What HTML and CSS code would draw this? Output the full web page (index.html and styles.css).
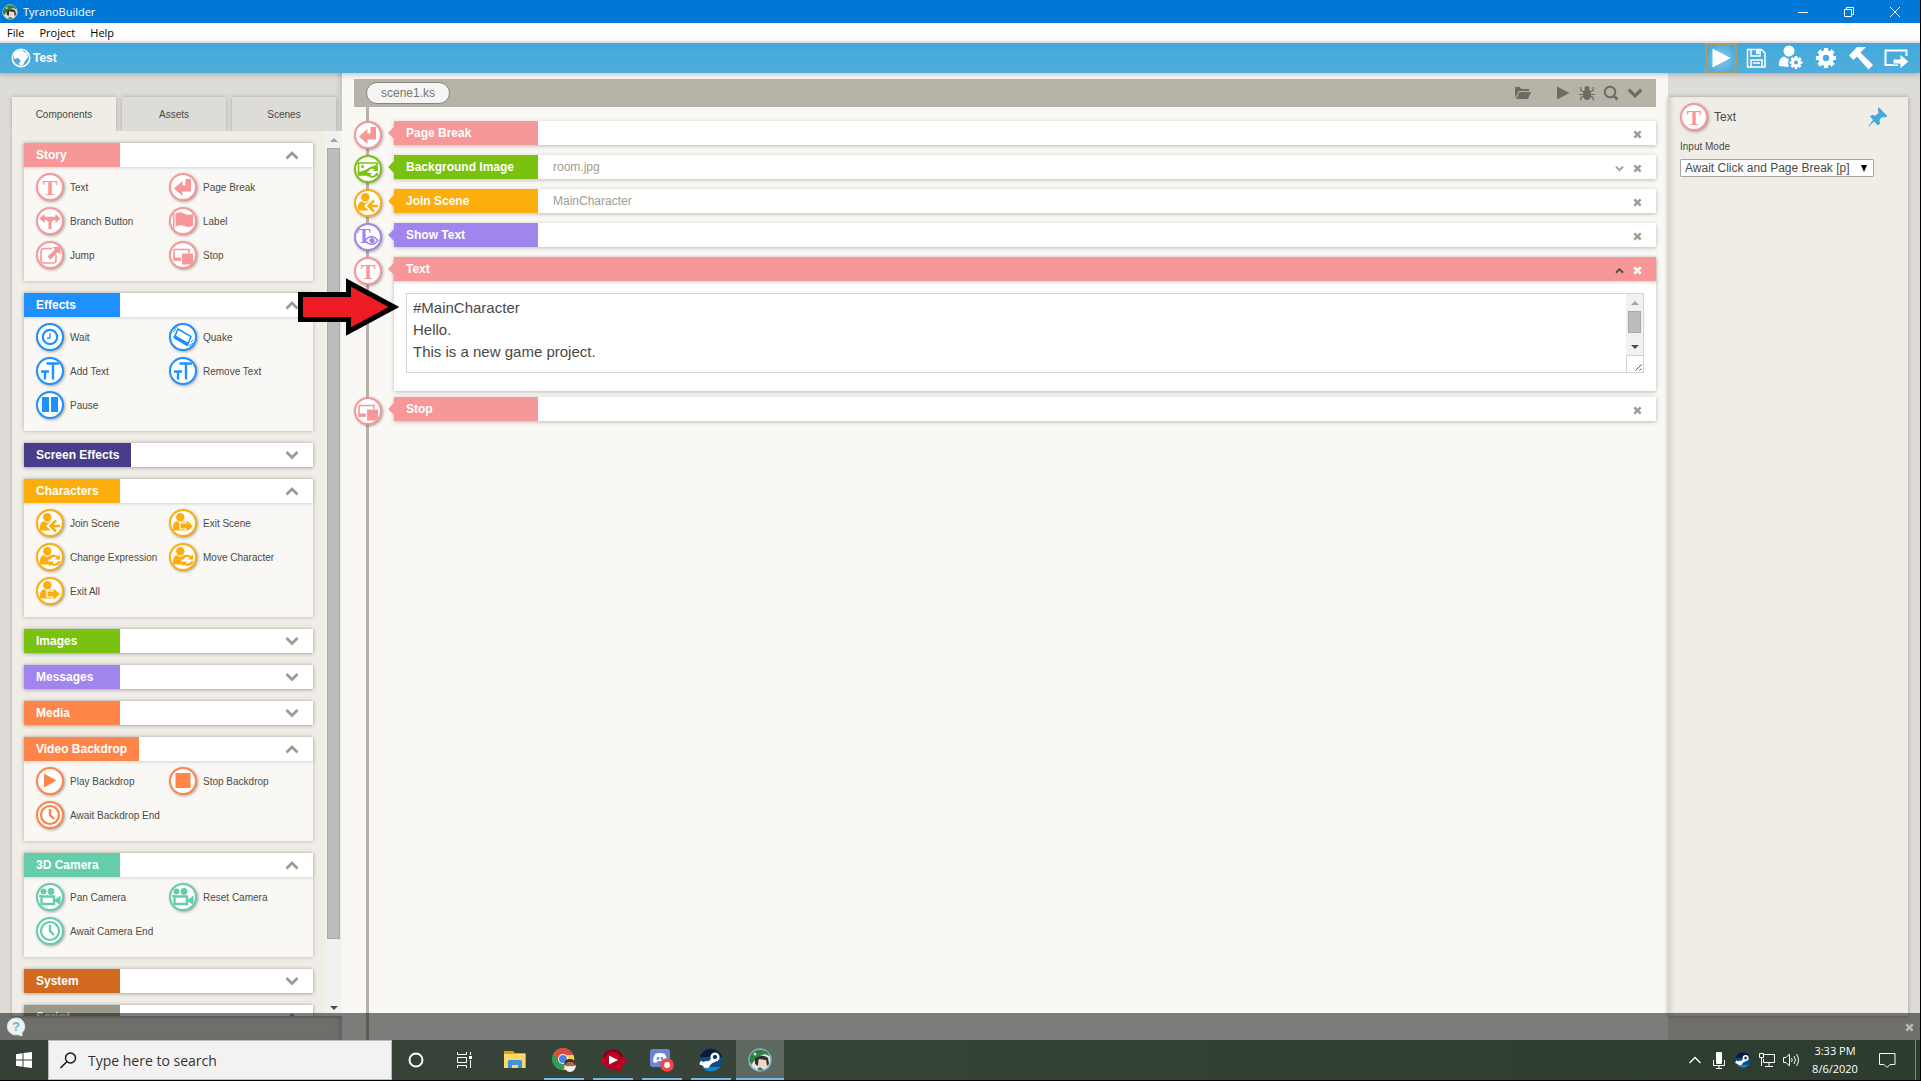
FILE: index.html
```html
<!DOCTYPE html>
<html lang="en">
<head>
    <meta charset="UTF-8">
    <meta name="viewport" content="width=device-width, initial-scale=1.0">
    <title>TyranoBuilder</title>
    <link rel="stylesheet" href="styles.css">
</head>
<body>
    <!-- icon shapes, used all over the page -->
    <svg class="sprite" aria-hidden="true">
        <symbol id="i-text" viewBox="0 0 24 24"><text x="12" y="20" text-anchor="middle" font-family="Liberation Serif, serif" font-weight="bold" font-size="22">T</text></symbol>
        <symbol id="i-break" viewBox="0 0 24 24"><path d="M3 13.500 11.500 6v4.500H14.500V4H20v12.500h-8.500V21z"/></symbol>
        <symbol id="i-branch" viewBox="0 0 24 24"><path d="M1.500 9.500 6.500 5v2.800h11V5l5 4.500-5 4.500v-2.800h-2.300l-1.700 2V20h-3v-6.800l-1.700-2H6.500V14z"/></symbol>
        <symbol id="i-label" viewBox="0 0 24 24"><path d="M2 4h1.500v17H2zM4.500 4.500c4-2 6.500-1 9 .3 2.500 1.200 5 1.200 8.500 0v12c-3.500 1.600-6 1.200-8.500.2-3-1.200-5.500-1.200-9 .5z"/></symbol>
        <symbol id="i-jump" viewBox="0 0 24 24"><path d="M14 5.500H6a3 3 0 0 0-3 3V17a3 3 0 0 0 3 3h9a3 3 0 0 0 3-3v-5" fill="none" stroke="currentColor" stroke-width="1.600"/><path d="M14.500 4H22.500v8l-2.700-2.700-7.300 7.200-3-3 7.500-7z"/></symbol>
        <symbol id="i-stop" viewBox="0 0 24 24"><path d="M3 6.500h15V10M3 6.500V17h7" fill="none" stroke="currentColor" stroke-width="1.600"/><path d="M2.500 14.500H10v3H2.500zM11 10.500h11v11H11z"/></symbol>
        <symbol id="i-wait" viewBox="0 0 24 24"><circle cx="12" cy="12" r="7.200" fill="none" stroke="currentColor" stroke-width="2.200"/><path d="M12 8v5H9" fill="none" stroke="currentColor" stroke-width="1.300"/></symbol>
        <symbol id="i-quake" viewBox="0 0 24 24"><path d="M7 4 20 11.500 17 19 4 11z" fill="none" stroke="currentColor" stroke-width="1.500"/><path d="m3 11 14 7-.5 3L3 13zM3 4l3-2M2 7l3-3M18 21l4-3M20 17l2-2" stroke="currentColor" stroke-width="1"/></symbol>
        <symbol id="i-type" viewBox="0 0 24 24"><path d="M8.500 4.500H21M15 4.500v16M3 12.500h8M7 12.500v8" fill="none" stroke="currentColor" stroke-width="2.400"/></symbol>
        <symbol id="i-pause" viewBox="0 0 24 24"><path d="M4 4h7v15H4zM13 4h7v15h-7z"/></symbol>
        <symbol id="i-person" viewBox="0 0 24 24"><circle cx="9.300" cy="6.300" r="4.200"/><path d="M2 19.500c-.5-6 1-8.700 4-9.200l3.300 2 3.200-2c3 .3 4.500 2.500 4.500 5v4.200z"/></symbol>
        <symbol id="i-join" viewBox="0 0 24 24"><use href="#i-person"/><path d="m18 9-6.500 6 6.500 6M12 15h10.500" fill="none" stroke="#fff" stroke-width="4.600"/><path d="m18 9.500-5.500 5.500 5.500 5.500M12.500 15H22" fill="none" stroke="currentColor" stroke-width="2.600"/></symbol>
        <symbol id="i-exit" viewBox="0 0 24 24"><use href="#i-person"/><path d="m15 8 8 7-8 7v-4H9v-6h6z" stroke="#fff" stroke-width="1.200"/></symbol>
        <symbol id="i-change" viewBox="0 0 24 24"><use href="#i-person"/><circle cx="16.500" cy="15.500" r="6" fill="#fff"/><path d="M11.500 14.500c1-4 6-5 8.500-2M21.500 16c-1 4-6 5-8.500 2" fill="none" stroke="currentColor" stroke-width="2.200"/><path d="M22 9.500V14.500H17zM11 21.500v-5H16z"/></symbol>
        <symbol id="i-play" viewBox="0 0 24 24"><path d="M6 4.500 18.500 11.500 6 18.500z"/></symbol>
        <symbol id="i-square" viewBox="0 0 24 24"><path d="M4.500 4h15v15h-15z"/></symbol>
        <symbol id="i-clock" viewBox="0 0 24 24"><circle cx="12" cy="12" r="9" fill="none" stroke="currentColor" stroke-width="2.200"/><path d="M12 6v6l4 4" fill="none" stroke="currentColor" stroke-width="2.400"/></symbol>
        <symbol id="i-camera" viewBox="0 0 24 24"><circle cx="5.500" cy="6.500" r="3"/><circle cx="13" cy="6.500" r="3.400"/><path d="M3.500 11.500h12.500v7.500H3.500z" fill="none" stroke="currentColor" stroke-width="2.400"/><path d="m17 14.500 5.500-4v9.500L17 16.500zM1 10h3v2H1z"/></symbol>
        <symbol id="i-image" viewBox="0 0 24 24"><path d="M2.500 6h18.500v12H2.500z" fill="none" stroke="currentColor" stroke-width="1.700"/><circle cx="6.500" cy="9.500" r="1.500"/><path d="m3 15 6-2 4-2 7-3v4l-4 6H3z"/><circle cx="16.500" cy="15" r="5" fill="#fff"/><path d="M11.500 14.500c1-4 6-5 8.500-2M21 16c-1 4-6 5-8 2" fill="none" stroke="currentColor" stroke-width="2"/><path d="M21.500 9.500V14H17zM11.500 20.500V16H16z"/></symbol>
        <symbol id="i-show" viewBox="0 0 24 24"><text x="8" y="18" text-anchor="middle" font-family="Liberation Serif, serif" font-weight="bold" font-size="20">T</text><path d="M9 15.500c4-5 9-5 13 0-4 5-9 5-13 0z" fill="#fff" stroke="currentColor" stroke-width="1.400"/><circle cx="16" cy="15.500" r="2.600"/></symbol>
        <symbol id="i-up" viewBox="0 0 14 14"><path d="m1.500 10.500 5.500-5.500 5.500 5.500" fill="none" stroke="currentColor" stroke-width="2.800"/></symbol>
        <symbol id="i-down" viewBox="0 0 14 14"><path d="m1.500 4 5.500 5.500 5.500-5.500" fill="none" stroke="currentColor" stroke-width="2.800"/></symbol>
        <symbol id="i-close" viewBox="0 0 10 10"><path d="m1.500 1.500 7 7m0-7-7 7" fill="none" stroke="currentColor" stroke-width="2.800"/></symbol>
        <symbol id="i-gear" viewBox="0 0 24 24"><circle cx="12" cy="12" r="6" fill="none" stroke="currentColor" stroke-width="5"/><path d="M12 1v4M12 19v4M1 12h4M19 12h4M4.200 4.200 7 7M17 17l2.800 2.800M4.200 19.800 7 17M17 7l2.800-2.800" stroke="currentColor" stroke-width="4.600"/></symbol>
        <symbol id="i-steam" viewBox="0 0 24 24"><circle cx="12" cy="12" r="11.500" fill="#0f4c86"/><path d="M1 9a11.500 11.500 0 0 1 22 0z" fill="#0a1a3c"/><path d="M3 19a11.500 11.500 0 0 0 18 0z" fill="#1585be"/><path d="m1 14.500 7 3 4-4 4-1.500" fill="none" stroke="#fff" stroke-width="4"/><circle cx="7.500" cy="16.500" r="3.500" fill="#fff"/><circle cx="16" cy="9" r="4.600" fill="#fff"/><circle cx="16" cy="9" r="2.600" fill="#0b2c5c" stroke="#fff"/></symbol>
        <symbol id="i-tyrano" viewBox="0 0 24 24"><circle cx="12" cy="12" r="11" fill="#e9e4d8" stroke="#79b4cf" stroke-width="1.500"/><path d="M1.500 13C1 5 8 1 13 2c5 0 8 3 8.500 6l-5-2-7 3-5 6-1 2z" fill="#347e43"/><path d="M7 11c3-4 9-4 13-1l1 6-2 2-1-6-7-1-1 7-3-2z" fill="#29332f"/><path d="M10.500 12h7v6l-3 2-4-3z" fill="#f4d4bd"/><circle cx="7" cy="6" r="1.500" fill="#cce0c8"/><path d="m9 21 3-2 4 3-4 .5z" fill="#347e43"/></symbol>
    </svg>

    <header class="titlebar">
        <svg class="title-logo"><use href="#i-tyrano"/></svg>
        <span class="title-text">TyranoBuilder</span>
        <div class="window-buttons">
            <button aria-label="Minimize"><svg width="10" height="10"><path d="M0 5.500h10" stroke="#fff"/></svg></button>
            <button aria-label="Restore"><svg width="10" height="10" fill="none" stroke="#fff"><path d="M.5 2.500h7v7h-7zM2.500 2.500v-2h7v7h-2"/></svg></button>
            <button aria-label="Close window"><svg width="10" height="10"><path d="m0 0 10 10M10 0 0 10" stroke="#fff"/></svg></button>
        </div>
    </header>

    <nav class="menubar">
        <button>File</button>
        <button>Project</button>
        <button>Help</button>
    </nav>

    <div class="appbar">
        <svg class="globe" viewBox="0 0 20 20"><circle cx="10" cy="10" r="8.700" fill="none" stroke="#fff" stroke-width="1.500"/><path d="M3 6c2-3 5-4 8-4l2 2 3 1 1 4-3 4-2 4-3 1-1-3 2-2-3-3-4 1z" fill="#fff"/></svg>
        <h1>Test</h1>
        <div class="app-tools">
            <button class="selected" aria-label="Play game"><svg viewBox="0 0 24 24"><path d="M3.500 2.500 21.500 12 3.500 21.500z"/></svg></button>
            <button aria-label="Save"><svg viewBox="0 0 24 24"><path d="M3.500 3.500h14l3.500 3.500v14H3.500zM7 4v6h9V4M7 21v-7h11v7M9 17h7" fill="none" stroke="currentColor" stroke-width="1.500"/><path d="M12 4h3v4h-3z"/></svg></button>
            <button aria-label="Characters"><svg viewBox="0 0 24 24"><circle cx="10" cy="5" r="5.500"/><path d="M0 20c-.5-6 2-9 5.500-9.500L9 13l4-2.500c2 0 3 1 4 3L9 21z"/><circle cx="17" cy="16.500" r="8" fill="#4aacdb"/><use href="#i-gear" x="10" y="9.500" width="14" height="14"/></svg></button>
            <button aria-label="Settings"><svg viewBox="0 0 24 24"><use href="#i-gear" x="1" y="1" width="22" height="22"/></svg></button>
            <button aria-label="Tools"><svg viewBox="0 0 24 24"><path d="M0 9.500 8 1h9l-5.500 5.500L24 19l-4.500 4.500L8 10.500l-3.500 3.500z"/></svg></button>
            <button aria-label="Export"><svg viewBox="0 0 24 24"><path d="M14 19H1.500V4.500h21V10" fill="none" stroke="currentColor" stroke-width="2"/><path d="m16 8 9 7.500-9 7.500v-5h-7v-5h7z" stroke="#4aacdb"/></svg></button>
        </div>
    </div>

    <div class="workspace">
        <aside class="sidebar">
            <div class="tabs">
                <button class="tab active">Components</button>
                <button class="tab">Assets</button>
                <button class="tab">Scenes</button>
            </div>
            <div class="palette">
                <div class="groups">
                    <section class="group pink">
                        <button class="group-head"><span>Story</span><svg><use href="#i-up"/></svg></button>
                        <div class="group-body">
                            <button><svg class="icon"><use href="#i-text"/></svg>Text</button>
                            <button><svg class="icon"><use href="#i-break"/></svg>Page Break</button>
                            <button><svg class="icon"><use href="#i-branch"/></svg>Branch Button</button>
                            <button><svg class="icon"><use href="#i-label"/></svg>Label</button>
                            <button><svg class="icon"><use href="#i-jump"/></svg>Jump</button>
                            <button><svg class="icon"><use href="#i-stop"/></svg>Stop</button>
                        </div>
                    </section>
                    <section class="group blue">
                        <button class="group-head"><span>Effects</span><svg><use href="#i-up"/></svg></button>
                        <div class="group-body">
                            <button><svg class="icon"><use href="#i-wait"/></svg>Wait</button>
                            <button><svg class="icon"><use href="#i-quake"/></svg>Quake</button>
                            <button><svg class="icon"><use href="#i-type"/></svg>Add Text</button>
                            <button><svg class="icon"><use href="#i-type"/></svg>Remove Text</button>
                            <button><svg class="icon"><use href="#i-pause"/></svg>Pause</button>
                        </div>
                    </section>
                    <section class="group indigo">
                        <button class="group-head"><span>Screen Effects</span><svg><use href="#i-down"/></svg></button>
                    </section>
                    <section class="group yellow">
                        <button class="group-head"><span>Characters</span><svg><use href="#i-up"/></svg></button>
                        <div class="group-body">
                            <button><svg class="icon"><use href="#i-join"/></svg>Join Scene</button>
                            <button><svg class="icon"><use href="#i-exit"/></svg>Exit Scene</button>
                            <button><svg class="icon"><use href="#i-change"/></svg>Change Expression</button>
                            <button><svg class="icon"><use href="#i-change"/></svg>Move Character</button>
                            <button><svg class="icon"><use href="#i-exit"/></svg>Exit All</button>
                        </div>
                    </section>
                    <section class="group green">
                        <button class="group-head"><span>Images</span><svg><use href="#i-down"/></svg></button>
                    </section>
                    <section class="group purple">
                        <button class="group-head"><span>Messages</span><svg><use href="#i-down"/></svg></button>
                    </section>
                    <section class="group orange">
                        <button class="group-head"><span>Media</span><svg><use href="#i-down"/></svg></button>
                    </section>
                    <section class="group orange">
                        <button class="group-head"><span>Video Backdrop</span><svg><use href="#i-up"/></svg></button>
                        <div class="group-body">
                            <button><svg class="icon"><use href="#i-play"/></svg>Play Backdrop</button>
                            <button><svg class="icon"><use href="#i-square"/></svg>Stop Backdrop</button>
                            <button><svg class="icon"><use href="#i-clock"/></svg>Await Backdrop End</button>
                        </div>
                    </section>
                    <section class="group teal">
                        <button class="group-head"><span>3D Camera</span><svg><use href="#i-up"/></svg></button>
                        <div class="group-body">
                            <button><svg class="icon"><use href="#i-camera"/></svg>Pan Camera</button>
                            <button><svg class="icon"><use href="#i-camera"/></svg>Reset Camera</button>
                            <button><svg class="icon"><use href="#i-clock"/></svg>Await Camera End</button>
                        </div>
                    </section>
                    <section class="group brown">
                        <button class="group-head"><span>System</span><svg><use href="#i-down"/></svg></button>
                    </section>
                    <section class="group grey">
                        <button class="group-head"><span>Script</span><svg><use href="#i-up"/></svg></button>
                    </section>
                </div>
                <div class="scrollbar">
                    <i class="arrow-up"></i>
                    <div class="track"><div class="thumb palette-thumb"></div></div>
                    <i class="arrow-down"></i>
                </div>
            </div>
        </aside>

        <main class="editor">
            <div class="scene-bar">
                <button class="scene-tab">scene1.ks</button>
                <div class="scene-tools">
                    <button class="folder" aria-label="Open folder"><svg viewBox="0 0 16 16"><path d="M0 13V2h5l1 2h8v2H4zM4.500 7H16l-3 7H1z"/></svg></button>
                    <button aria-label="Play scene"><svg viewBox="0 0 16 16"><path d="M2 1.500 14.500 8 2 14.500z"/></svg></button>
                    <button aria-label="Debug"><svg viewBox="0 0 16 16"><ellipse cx="8" cy="9.500" rx="4" ry="5.500"/><circle cx="8" cy="3.500" r="2.500"/><path d="m5 7-3-1.500L1.500 2M11 7l3-1.500.5-3.500M4 9.500H0M12 9.500h4M5 11l-3 1.500-.5 3M11 11l3 1.500.5 3" fill="none" stroke="currentColor" stroke-width="1.200"/></svg></button>
                    <button aria-label="Search"><svg viewBox="0 0 16 16"><circle cx="7" cy="7" r="5.300" fill="none" stroke="currentColor" stroke-width="2"/><path d="m10.500 10.500 4 4" stroke="currentColor" stroke-width="2.600"/></svg></button>
                    <button aria-label="More"><svg><use href="#i-down"/></svg></button>
                </div>
            </div>

            <div class="timeline">
                <article class="step pink">
                    <svg class="icon"><use href="#i-break"/></svg>
                    <div class="card"><div class="card-head"><h2>Page Break</h2><p></p><button aria-label="Delete"><svg><use href="#i-close"/></svg></button></div></div>
                </article>
                <article class="step green">
                    <svg class="icon"><use href="#i-image"/></svg>
                    <div class="card"><div class="card-head"><h2>Background Image</h2><p>room.jpg</p><button aria-label="Expand"><svg><use href="#i-down"/></svg></button><button aria-label="Delete"><svg><use href="#i-close"/></svg></button></div></div>
                </article>
                <article class="step yellow">
                    <svg class="icon"><use href="#i-join"/></svg>
                    <div class="card"><div class="card-head"><h2>Join Scene</h2><p>MainCharacter</p><button aria-label="Delete"><svg><use href="#i-close"/></svg></button></div></div>
                </article>
                <article class="step purple">
                    <svg class="icon"><use href="#i-show"/></svg>
                    <div class="card"><div class="card-head"><h2>Show Text</h2><p></p><button aria-label="Delete"><svg><use href="#i-close"/></svg></button></div></div>
                </article>
                <article class="step pink open">
                    <svg class="icon"><use href="#i-text"/></svg>
                    <div class="card">
                        <div class="card-head"><h2>Text</h2><p></p><button class="collapse" aria-label="Collapse"><svg><use href="#i-up"/></svg></button><button aria-label="Delete"><svg><use href="#i-close"/></svg></button></div>
                        <div class="text-box">
                            <textarea aria-label="Text" rows="3">#MainCharacter
Hello.
This is a new game project.</textarea>
                            <div class="text-side">
                                <div class="scrollbar">
                                    <i class="arrow-up"></i>
                                    <div class="track"><div class="thumb"></div></div>
                                    <i class="arrow-down"></i>
                                </div>
                                <svg class="grip" viewBox="0 0 16 16"><path d="m8.500 14.500 6-6M12.500 14.500l2-2" stroke="#555"/></svg>
                            </div>
                        </div>
                    </div>
                </article>
                <article class="step pink">
                    <svg class="icon"><use href="#i-stop"/></svg>
                    <div class="card"><div class="card-head"><h2>Stop</h2><p></p><button aria-label="Delete"><svg><use href="#i-close"/></svg></button></div></div>
                </article>
            </div>
        </main>

        <aside class="inspector">
            <div class="inspector-panel">
                <div class="inspector-head pink">
                    <svg class="icon"><use href="#i-text"/></svg>
                    <h2>Text</h2>
                    <button aria-label="Pin"><svg viewBox="0 0 20 20"><path d="m10.500 0 9 9-2.500 1.500-3-.5-2.500 3 .5 3.500-2 2-4-4L1 19.500H.5V19L5 13 2 9.500 4 8l3.500.5 3-2.500-.5-3z"/></svg></button>
                </div>
                <label for="inputMode">Input Mode</label>
                <div class="select-wrap">
                    <select id="inputMode">
                        <option>Await Click and Page Break [p]</option>
                    </select>
                </div>
            </div>
        </aside>

        <div class="statusbar">
            <button aria-label="Help"><svg width="20" height="20" viewBox="0 0 20 20"><path d="M10 1a8.500 8.500 0 1 0 2 16.700l4 1.300v-3.300A8.500 8.500 0 0 0 10 1z" fill="#f3f1ec" stroke="#c8e5f2"/><text x="10" y="14" text-anchor="middle" font-family="Liberation Sans, sans-serif" font-weight="bold" font-size="13" fill="#58b5de">?</text></svg></button>
            <button class="status-close" aria-label="Close"><svg><use href="#i-close"/></svg></button>
        </div>

        <!-- red callout arrow -->
        <svg class="pointer" viewBox="0 0 102 58"><path d="M2.500 16.500h48V4.500L96 29 50.500 53.500v-12h-48z" fill="#ed1c24" stroke="#000" stroke-width="5"/></svg>
    </div>

    <footer class="taskbar">
        <button class="start" aria-label="Start"><svg width="16" height="16" fill="#fff"><path d="M0 2.200 6.500 1.300V7.500H0zM7.500 1.100 16 0v7.500H7.500zM0 8.500h6.500v6.200L0 13.800zM7.500 8.500H16V16l-8.500-1.100z"/></svg></button>
        <div class="search">
            <svg width="17" height="17" fill="none" stroke="#111" stroke-width="1.400"><circle cx="10.500" cy="6" r="5"/><path d="M7 9.500.5 16"/></svg>
            <input type="text" placeholder="Type here to search" aria-label="Search">
        </div>
        <button aria-label="Cortana"><svg width="16" height="16"><circle cx="8" cy="8" r="6.500" fill="none" stroke="#fff" stroke-width="2"/></svg></button>
        <button aria-label="Task View"><svg width="17" height="16" fill="none" stroke="#fff"><path d="M1.500 0v2.500h9V0M1.500 16v-2.500h9V16M1.500 5.500h9v5h-9zM14.500 0v3M14.500 8v8"/><path d="M13 4h3v3h-3z" fill="#fff" stroke="none"/></svg></button>
        <div class="apps">
            <button aria-label="File Explorer"><svg width="22" height="20"><path d="M0 1h9l2 2h10.500v15H0z" fill="#e2a100"/><path d="M0 4h21.500v14H0z" fill="#ffd968"/><path d="M4 18v-6.500q0-1.500 1.500-1.500h11q1.500 0 1.500 1.500V18h-4v-3H8v3z" fill="#3b96dd"/></svg></button>
            <button class="running" aria-label="Chrome"><svg width="24" height="24"><circle cx="11" cy="11" r="11" fill="#2da14f"/><path d="M1.500 5.500a11 11 0 0 1 19 0l1 3.500H11l-4 5z" fill="#dd4b3e"/><path d="M11 7h10.500A11 11 0 0 1 11 22l5-9z" fill="#ffce43"/><circle cx="11" cy="11" r="5" fill="#fff"/><circle cx="11" cy="11" r="4" fill="#4285e8"/><circle cx="18" cy="17" r="6" fill="#ac6748"/><path d="M12 17q1-7 6-6 6 0 6 7l-3-4h-5z" fill="#3e302a"/><path d="M12 17q2 2 6 1 4 1 6-1-1 7-6 7t-6-7z" fill="#f1eeee"/></svg></button>
            <button class="running" aria-label="Music"><svg width="24" height="24"><circle cx="12" cy="12" r="9.500" fill="#b9001f"/><path d="M3 9a9.500 9.500 0 0 1 18 0" fill="none" stroke="#7c0014" stroke-width="2"/><path d="M0 9h3v7H0zM21 9h3v7h-3z" fill="#cb0021"/><path d="M20 16v4l-4 3" fill="none" stroke="#b9001f" stroke-width="3"/><path d="m8 7.500 9 4.500-9 4.500z" fill="#fff"/></svg></button>
            <button class="running" aria-label="Discord"><svg width="24" height="24"><path d="M3 1h14q3 0 3 3v18l-4-3H3q-3 0-3-3V4q0-3 3-3z" fill="#6f86d6"/><path d="M5 6q5-2 10 0 2 4 2 8l-3 1-2-2H8l-2 2-3-1q0-4 2-8z" fill="#fff"/><circle cx="8" cy="10.500" r="1.400" fill="#6f86d6"/><circle cx="12" cy="10.500" r="1.400" fill="#6f86d6"/><circle cx="17" cy="17" r="6.800" fill="#f04747"/><circle cx="17" cy="17" r="3" fill="#fff"/></svg></button>
            <button class="running" aria-label="Steam"><svg width="24" height="24"><use href="#i-steam"/></svg></button>
            <button class="running current" aria-label="TyranoBuilder"><svg width="24" height="24"><use href="#i-tyrano"/></svg></button>
        </div>
        <div class="tray">
            <button aria-label="Hidden icons"><svg width="12" height="8"><path d="m.5 7 5.500-5.500L11.500 7" fill="none" stroke="#fff" stroke-width="1.300"/></svg></button>
            <button aria-label="Microphone"><svg width="12" height="17"><rect x="3" width="6" height="12" rx="1" fill="#fff"/><path d="M.5 8v5.500h11V8M6 13v3M3 16.500h6" fill="none" stroke="#fff"/></svg></button>
            <button aria-label="Steam"><svg width="16" height="16"><use href="#i-steam"/></svg></button>
            <button aria-label="Network"><svg width="16" height="14" fill="none" stroke="#fff"><path d="M5 1.500h10.500v8H4.500V6M10 10v3M6 13.500h8M.5.5h4v4h-4zM2.500 5v8"/></svg></button>
            <button aria-label="Volume"><svg width="17" height="14" fill="none" stroke="#fff"><path d="M.5 4.500H3L6.500 1v12L3 9.500H.5zM8.500 5q1.500 2 0 4M11 3q3 4 0 8M13.500 1q4 6 0 12"/></svg></button>
            <div class="clock"><span>3:33 PM</span><span>8/6/2020</span></div>
            <button class="notice" aria-label="Notifications"><svg width="17" height="17"><path d="M.5 1.500h15.500v11h-5l-3 3-3-3H.5z" fill="none" stroke="#fff"/></svg></button>
        </div>
    </footer>
</body>
</html>
```
FILE: styles.css
```css
* {
    box-sizing: border-box;
}
body {
    display: flex;
    flex-direction: column;
    height: 100vh;
    margin: 0;
    border-right: 1px solid #000;
    border-bottom: 1px solid #000;
    overflow: hidden;
    font-family: "Liberation Sans", Arial, sans-serif;
    font-size: 12px;
    color: #4b4a44;
}
h1, h2, p {
    margin: 0;
}
button {
    display: flex;
    align-items: center;
    justify-content: center;
    padding: 0;
    border: none;
    background: none;
    color: inherit;
    font: inherit;
}
svg {
    flex: none;
}
svg:not([fill]) {
    fill: currentColor;
}
.sprite {
    display: none;
}

/* component colours */
.pink { --tone: #f79797; }
.blue { --tone: #1e90ff; }
.indigo { --tone: #483d8b; }
.yellow { --tone: #fbae0c; }
.green { --tone: #7bc110; }
.purple { --tone: #a185ee; }
.orange { --tone: #ff8549; }
.teal { --tone: #66cdaa; }
.brown { --tone: #d2691e; }
.grey { --tone: #9a988b; }

.icon {
    width: 28px;
    height: 28px;
    border: 2px solid var(--tone);
    border-radius: 50%;
    background-color: #fff;
    box-shadow: 1px 1px 3px rgba(0, 0, 0, 0.35);
    color: var(--tone);
}

/* window */
.titlebar {
    display: flex;
    align-items: center;
    height: 23px;
    padding-left: 2px;
    background-color: #0078d7;
    color: #fff;
    font-family: "Open Sans", sans-serif;
    font-size: 11px;
}
.title-logo {
    width: 16px;
    height: 16px;
    margin-right: 5px;
}
.window-buttons {
    display: flex;
    margin-left: auto;
    padding-right: 2px;
}
.window-buttons button {
    width: 46px;
    height: 20px;
}
.menubar {
    display: flex;
    gap: 15px;
    height: 20px;
    padding-left: 7px;
    border-bottom: 2px solid #f0f0f0;
    background-color: #fff;
    color: #000;
    font-family: "Open Sans", sans-serif;
    font-size: 11px;
}
.appbar {
    display: flex;
    align-items: center;
    height: 30px;
    padding: 0 8px 0 11px;
    background: linear-gradient(#41a9db, #52aedb);
    color: #fff;
    position: relative;
    z-index: 2;
    box-shadow: 0 1px 6px rgba(0, 0, 0, 0.25);
}
.appbar h1 {
    font-size: 12px;
}
.globe {
    width: 20px;
    height: 20px;
    margin-right: 2px;
}
.app-tools {
    display: flex;
    gap: 3px;
    margin-left: auto;
}
.app-tools button {
    width: 32px;
    height: 30px;
}
.app-tools svg {
    width: 24px;
    height: 24px;
    overflow: visible;
}
.app-tools .selected {
    outline: 2px solid #a89d67;
    outline-offset: -2px;
    background: radial-gradient(#8fcdec, transparent 70%);
}

/* left side */
.workspace {
    display: flex;
    flex: 1;
    min-height: 0;
    position: relative;
}
.sidebar {
    display: flex;
    flex-direction: column;
    width: 342px;
    padding: 24px 0 24px 12px;
    background-color: #dddcd7;
    box-shadow: inset -6px 0 6px -4px rgba(0, 0, 0, 0.15);
}
.tabs {
    display: flex;
    gap: 6px;
}
.tab {
    width: 104px;
    height: 34px;
    background-color: #dddcd7;
    box-shadow: 0 0 4px rgba(0, 0, 0, 0.25);
    font-size: 10px;
    clip-path: inset(-4px -4px 0 -4px);
}
.tab.active {
    background-color: #f0ede6;
}
.palette {
    display: flex;
    flex: 1;
    min-height: 0;
    background-color: #f0ede6;
    box-shadow: 0 1px 3px rgba(0, 0, 0, 0.25);
    clip-path: inset(0 0 -4px -4px);
}
.groups {
    display: flex;
    flex: 1;
    flex-direction: column;
    gap: 12px;
    padding: 12px;
    overflow: hidden;
}
.group {
    flex: none;
    background-color: #f9f8f4;
    box-shadow: 0 0 4px rgba(0, 0, 0, 0.25);
}
.group-head {
    width: 100%;
    height: 24px;
    justify-content: space-between;
    padding-right: 14px;
    background-color: #fff;
    box-shadow: 0 1px 3px rgba(0, 0, 0, 0.15);
    color: #9f9c8f;
}
.group-head span {
    min-width: 96px;
    padding: 0 12px;
    background-color: var(--tone);
    color: #fff;
    font-weight: bold;
    line-height: 24px;
    text-align: left;
}
.group-head svg {
    width: 14px;
    height: 14px;
}
.group-body {
    display: grid;
    grid-template-columns: 133px 133px;
    row-gap: 6px;
    padding: 6px 12px 12px;
}
.group-body button {
    justify-content: flex-start;
    gap: 6px;
    font-size: 10px;
    white-space: nowrap;
}
.scrollbar {
    display: flex;
    flex: 1;
    flex-direction: column;
    align-items: center;
    width: 17px;
    background-color: #f1f1f1;
}
.palette .scrollbar {
    flex: none;
}
.arrow-up, .arrow-down {
    flex: none;
    width: 17px;
    height: 17px;
}
.arrow-up::before, .arrow-down::before {
    content: "";
    display: block;
    width: 0;
    margin: 7px auto;
    border: 4px solid transparent;
    border-top: none;
    border-bottom-color: #a3a3a3;
}
.arrow-down::before {
    border-top: 4px solid #505050;
    border-bottom: none;
}
.track {
    flex: 1;
    width: 13px;
}
.thumb {
    height: 22px;
    border: 1px solid #a8a8a8;
    background-color: #bcbcbc;
}
.palette-thumb {
    height: 93%;
}

/* scene editor */
.editor {
    display: flex;
    flex: 1;
    flex-direction: column;
    padding: 6px 12px 0;
    background-color: #f9f8f4;
}
.scene-bar {
    display: flex;
    align-items: center;
    height: 28px;
    padding: 0 9px 0 12px;
    background-color: #b6b3a9;
}
.scene-tab {
    height: 22px;
    padding: 0 14px;
    border: 1px solid #88877f;
    border-radius: 11px;
    background-color: #f5f5f5;
    color: #77756c;
}
.scene-tools {
    display: flex;
    margin-left: auto;
    color: #6d6b62;
}
.scene-tools button {
    width: 24px;
}
.scene-tools svg {
    width: 16px;
    height: 16px;
}
.scene-tools .folder {
    margin-right: 16px;
}
.timeline {
    display: flex;
    flex: 1;
    flex-direction: column;
    gap: 6px;
    padding-top: 14px;
    background: linear-gradient(#b6b3a9, #b6b3a9) 12px 0 / 3px 100% no-repeat;
}
.step {
    display: flex;
    align-items: flex-start;
    gap: 12px;
}
.card {
    flex: 1;
    position: relative;
    background-color: #fff;
    box-shadow: 0 1px 4px rgba(0, 0, 0, 0.25);
}
.card::before {
    content: "";
    position: absolute;
    top: 6px;
    left: -6px;
    border: 6px solid transparent;
    border-left: none;
    border-right-color: var(--tone);
}
.card-head {
    display: flex;
    align-items: center;
    height: 24px;
    padding-right: 10px;
    color: #9f9c8f;
}
.card-head h2 {
    width: 144px;
    padding-left: 12px;
    background-color: var(--tone);
    color: #fff;
    font-size: 12px;
    line-height: 24px;
}
.card-head p {
    flex: 1;
    padding-left: 15px;
}
.card-head button {
    width: 18px;
    height: 24px;
    padding-top: 2px;
}
.card-head svg {
    width: 9px;
    height: 9px;
}
.open .card-head {
    background-color: var(--tone);
    box-shadow: 0 1px 3px rgba(0, 0, 0, 0.2);
    color: #fff;
}
.open .collapse {
    color: #4b4a44;
}
.text-box {
    display: flex;
    height: 80px;
    margin: 12px 12px 18px;
    border: 1px solid #d3d3d3;
}
textarea {
    flex: 1;
    padding: 3px 6px;
    border: none;
    background: none;
    color: #4b4a44;
    font-family: inherit;
    font-size: 15px;
    line-height: 22px;
    resize: none;
    overflow: hidden;
}
.text-side {
    display: flex;
    flex-direction: column;
}
.grip {
    width: 17px;
    height: 17px;
    border-top: 1px solid #d3d3d3;
    border-left: 1px solid #d3d3d3;
}

/* right side */
.inspector {
    display: flex;
    width: 252px;
    padding: 24px 12px 24px 0;
    background-color: #dddcd7;
}
.inspector-panel {
    flex: 1;
    padding: 6px 12px;
    background-color: #f0ede6;
    box-shadow: 0 0 4px rgba(0, 0, 0, 0.3), inset 6px 0 6px -4px rgba(0, 0, 0, 0.15);
}
.inspector-head {
    display: flex;
    align-items: center;
    gap: 6px;
    margin-bottom: 8px;
}
.inspector-head h2 {
    font-size: 12px;
    font-weight: normal;
}
.inspector-head button {
    margin-left: auto;
    padding-right: 8px;
    color: #45aadb;
}
.inspector-head button svg {
    width: 20px;
    height: 20px;
}
.inspector label {
    display: block;
    margin-bottom: 4px;
    font-size: 10px;
    line-height: 16px;
}
.select-wrap {
    display: inline-block;
    position: relative;
}
.select-wrap::after {
    content: "";
    position: absolute;
    top: 6px;
    right: 7px;
    border: 3px solid transparent;
    border-top: 7px solid #000;
    border-bottom: none;
}
select {
    display: block;
    width: 194px;
    height: 18px;
    padding: 0 4px;
    border: 1px solid #a6a6a6;
    border-radius: 1px;
    background-color: #fff;
    color: inherit;
    font: inherit;
    appearance: none;
}
.statusbar {
    display: flex;
    align-items: center;
    justify-content: space-between;
    position: absolute;
    right: 0;
    bottom: 0;
    left: 0;
    height: 27px;
    padding: 0 6px;
    background-color: rgba(0, 0, 0, 0.5);
    color: #bab9b6;
}
.status-close {
    padding-top: 2px;
}
.status-close svg {
    width: 9px;
    height: 9px;
}
.pointer {
    position: absolute;
    top: 205px;
    left: 298px;
    width: 102px;
    height: 58px;
}

/* taskbar */
.taskbar {
    display: flex;
    height: 40px;
    background: linear-gradient(90deg, #364036, #374438 40%, #2c3c2e);
    color: #fff;
    font-family: "Open Sans", sans-serif;
}
.taskbar button {
    width: 48px;
    height: 40px;
}
.search {
    display: flex;
    align-items: center;
    gap: 9px;
    width: 344px;
    padding-left: 11px;
    border: 1px solid #b9b9b9;
    background-color: #f2f2f2;
}
.search input {
    flex: 1;
    min-width: 0;
    border: none;
    background: none;
    font-family: inherit;
    font-size: 14px;
}
.search input::placeholder {
    color: #333;
}
.apps {
    display: flex;
    gap: 1px;
    margin-left: 3px;
}
.taskbar .running {
    background: linear-gradient(#76b9ed, #76b9ed) 50% 100% / 40px 2px no-repeat;
}
.taskbar .current {
    background-color: #5d685f;
    background-size: 48px 2px;
}
.tray {
    display: flex;
    margin-left: auto;
    margin-right: 4px;
    padding-right: 8px;
    border-right: 1px solid #7c867d;
}
.tray button {
    width: 24px;
}
.clock {
    display: flex;
    flex-direction: column;
    justify-content: center;
    width: 64px;
    font-size: 11px;
    line-height: 18px;
    text-align: center;
}
.tray .notice {
    width: 40px;
}
```
